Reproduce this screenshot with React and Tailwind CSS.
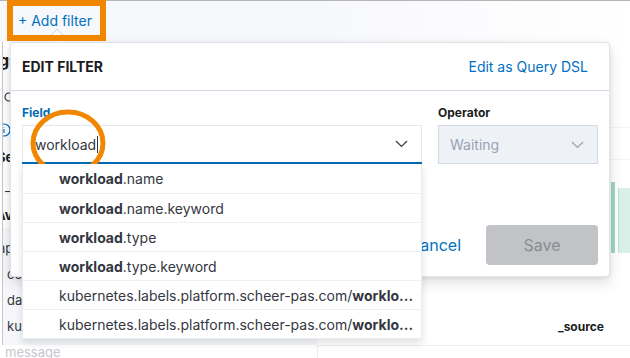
const rows = [
  { bold: "workload", rest: ".name" },
  { bold: "workload", rest: ".name.keyword" },
  { bold: "workload", rest: ".type" },
  { bold: "workload", rest: ".type.keyword" },
  { pre: "kubernetes.labels.platform.scheer-pas.com/", bold: "worklo..." },
  { pre: "kubernetes.labels.platform.scheer-pas.com/", bold: "worklo..." },
]

function Chevron({ color }) {
  return (
    <svg width="13" height="8" viewBox="0 0 13 8" fill="none">
      <path d="M1 1L6.5 6.5L12 1" stroke={color} strokeWidth="1.2" />
    </svg>
  )
}

export default function App() {
  return (
    <div className="relative w-[630px] h-[358px] overflow-hidden bg-white font-['Inter',sans-serif] text-[#343741]">
      {/* page behind the popover */}
      <div className="h-[42px] border-t border-[#b5b5b5] bg-gradient-to-r from-[#f7f8fb] via-[#f7f8fb] to-white pl-[18px] pt-[7px]">
        <span className="text-[14px] text-[#0071c2]">+ Add filter</span>
      </div>
      <div className="flex h-[316px]">
        <aside className="ml-[2px] w-[315px] shrink-0 border-l border-[#c9c9c9] h-[303px] flex flex-col text-[14px] overflow-hidden">
          <div className="h-[36px] shrink-0 flex items-center font-bold text-[16px] text-[#1a1c21] -ml-[4px]">gs_index</div>
          <div className="h-[40px] shrink-0 flex items-center pl-[1px]">
            <svg width="12" height="12" viewBox="0 0 12 12" fill="none"><circle cx="5" cy="5" r="4" stroke="#343741" strokeWidth="1.2" /><path d="M8 8l3 3" stroke="#343741" strokeWidth="1.2" /></svg>
          </div>
          <div className="h-[24px] shrink-0 flex items-center -ml-[6px]">
            <svg width="14" height="14" viewBox="0 0 14 14" fill="none"><circle cx="7" cy="7" r="6" stroke="#0071c2" strokeWidth="1.2" /><path d="M7 6v4M7 4v.5" stroke="#0071c2" strokeWidth="1.2" /></svg>
          </div>
          <div className="h-[32px] shrink-0 flex items-center font-bold text-[13px] text-[#1a1c21] -ml-[6px]">Selected fields</div>
          <div className="h-[36px] shrink-0 flex items-center pl-[2px] text-[13px]">–</div>
          <div className="h-[12px] shrink-0 flex items-center font-bold text-[13px] text-[#1a1c21] -ml-[7px]">Available fields</div>
          <div className="h-[6px] shrink-0" />
          <div className="h-[117px] shrink-0 bg-[#f5f7fa] flex flex-col pt-[8px] text-[13px]">
            <div className="h-[26px] shrink-0 flex items-center -ml-[5px]">app</div>
            <div className="h-[26px] shrink-0 flex items-center pl-[4px]">container</div>
            <div className="h-[26px] shrink-0 flex items-center pl-[4px]">data</div>
            <div className="h-[26px] shrink-0 flex items-center pl-[4px]">kubernetes</div>
          </div>
        </aside>
        <main className="flex-1 flex flex-col">
          <div className="h-[86px] shrink-0 border-b border-[#f3f4f6]" />
          <div className="h-[32px] shrink-0 border-b border-[#f3f4f6]" />
          <div className="h-[93px] shrink-0 flex justify-end items-end gap-[3px]">
            <div className="w-[4px] h-[71px] bg-[#9fd6c2]" />
            <div className="w-[12px] h-[65px] bg-[#d9f0e8] border-l border-[#b9e3d4]" />
          </div>
          <div className="h-[92px] shrink-0 flex items-end justify-end pr-[26px] pb-[9px]">
            <span className="text-[12px] font-bold text-[#1a1c21]">_source</span>
          </div>
          <div className="flex-1 border-t border-l border-[#eceef2]" />
        </main>
      </div>
      <div className="absolute left-[5px] top-[343px] text-[13px] text-[#c5c8cf]">message</div>

      {/* popover arrow */}
      <div className="absolute left-[51px] top-[31px] w-[12px] h-[12px] rotate-45 bg-white border-l border-t border-[#d3dae6]" />

      {/* edit filter popover */}
      <div className="absolute left-[10px] top-[42px] w-[600px] h-[235px] bg-white border border-[#e0e4ea] rounded-[4px] shadow-[0_6px_14px_rgba(0,0,0,0.12),0_1px_4px_rgba(0,0,0,0.08)]">
        <div className="h-[48px] flex items-center justify-between pl-[11px] pr-[21px] border-b border-[#d3dae6]">
          <span className="text-[14px] font-bold text-[#1a1c21]">EDIT FILTER</span>
          <span className="text-[14px] text-[#0071c2]">Edit as Query DSL</span>
        </div>
        <div className="px-[11px] pt-[14px]">
          <div className="flex gap-[16px]">
            <div className="w-[400px] flex flex-col gap-[4px]">
              <span className="text-[12px] font-bold text-[#006bb8] leading-[16px]">Field</span>
              <div className="relative">
                <div className="h-[37px] border border-[#e3e7ee] border-b-0 flex items-center justify-between pl-[12px] pr-[13px] bg-white">
                  <div className="flex items-center">
                    <span className="text-[14px] text-[#343741]">workload</span>
                    <span className="w-px h-[17px] bg-[#343741] ml-[1px]" />
                  </div>
                  <Chevron color="#343741" />
                </div>
                <div className="h-[2px] bg-[#006bb8]" />
                <div className="absolute left-0 right-0 top-[39px] bg-white border border-[#e9ecf1] border-t-0 shadow-[0_4px_8px_rgba(0,0,0,0.12)] z-10">
                  {rows.map((r, i) => (
                    <div key={i} className={"h-[29px] flex items-center pl-[36px] pr-[10px] text-[14px] text-[#343741] whitespace-nowrap overflow-hidden" + (i > 0 ? " border-t border-[#eef0f3]" : "")}>
                      {r.pre && <span>{r.pre}</span>}
                      <span className="font-bold">{r.bold}</span>
                      {r.rest && <span>{r.rest}</span>}
                    </div>
                  ))}
                </div>
              </div>
            </div>
            <div className="w-[160px] flex flex-col gap-[4px]">
              <span className="text-[12px] font-bold text-[#1a1c21] leading-[16px]">Operator</span>
              <div className="h-[39px] bg-[#eef2f7] border border-[#d3dae6] flex items-center justify-between pl-[11px] pr-[13px]">
                <span className="text-[14px] text-[#98a2b3]">Waiting</span>
                <Chevron color="#98a2b3" />
              </div>
            </div>
          </div>
          <div className="flex justify-end items-center gap-[25px] mt-[61px]">
            <span className="text-[16px] text-[#0071c2]">Cancel</span>
            <div className="w-[112px] h-[40px] rounded-[4px] bg-[#c2c3c6] flex items-center justify-center text-[16px] text-[#898c92]">Save</div>
          </div>
        </div>
      </div>

      {/* orange annotations */}
      <div className="absolute left-[7px] top-0 w-[99px] h-[41px] border-[6px] border-[#f18700]" />
      <svg className="absolute left-[30px] top-[109px]" width="76" height="68" viewBox="0 0 76 68" fill="none">
        <ellipse cx="38" cy="34" rx="35" ry="31" stroke="#f18700" strokeWidth="5" />
      </svg>
    </div>
  )
}
